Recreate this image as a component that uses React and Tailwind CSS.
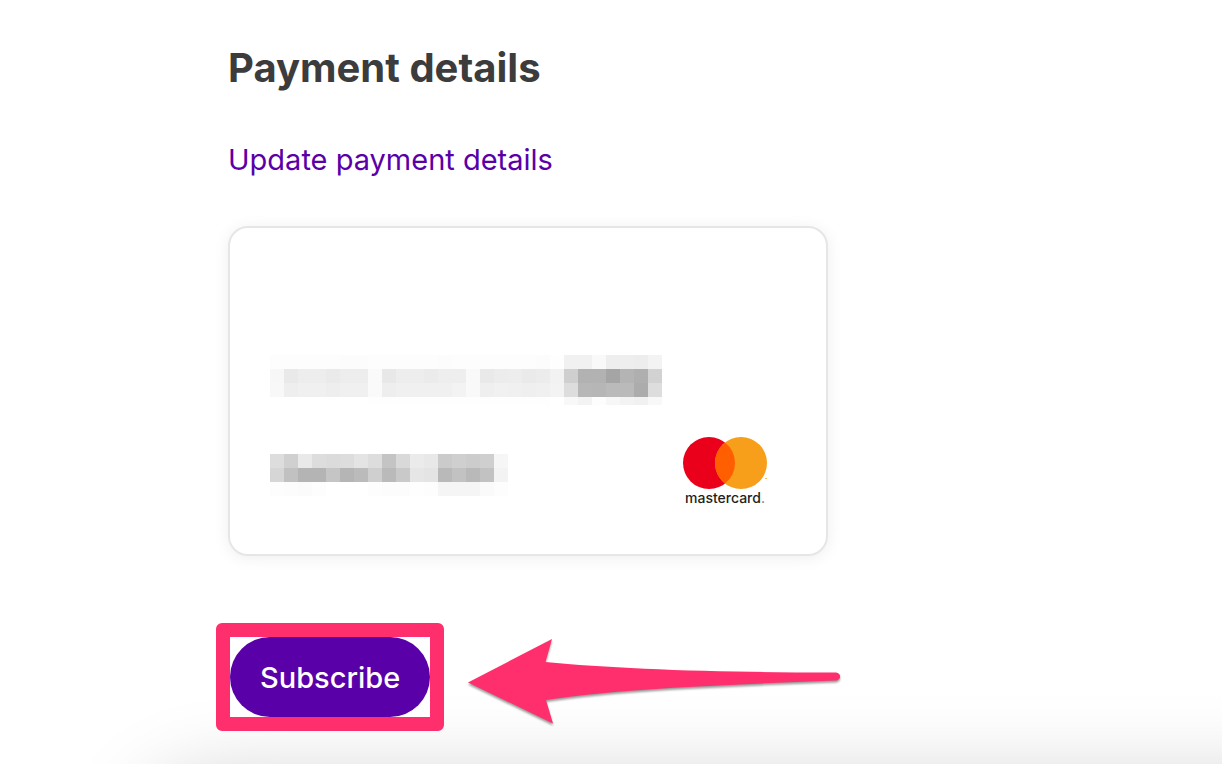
import React from "react";

const numberRows = [
  "fd fd fd fd fd fc fc fd fd fd fd fd fc fd fd fd fd fd fd fc fe f1 f1 f9 ee ee ed f3",
  "f7 e9 ed ed ea ed ed fa e8 ed ed eb ee ee f9 e9 ec ed ea ec f2 cf b2 b2 a5 b4 af d2",
  "f8 ee f0 f0 ee f0 f0 fa ee f0 f0 f0 f0 f3 f9 ef f1 f0 ef f0 f3 dd b7 b6 ba ba ac dd",
  "ff ff ff ff ff ff ff fe fe fe fe fe fe fe fe fe fe fe fe fe ff f8 f3 fd f7 f3 f1 f8",
];

const nameRows = [
  "dd d0 e9 dd db dd e4 dd c4 d9 eb e8 cb cf cc cf f6",
  "d6 c1 b4 b4 c5 b5 bb cf ba c9 e6 e4 b9 c2 b9 c2 f3",
  "fd fc fb fd ff ff ff fd fc fc fe fd f5 f5 f5 fa fd",
];

function Mosaic({ rows, label }) {
  return (
    <div role="img" aria-label={label}>
      {rows.map((row, r) => (
        <div key={r} className={r === 3 ? "flex h-2" : "flex h-3.5"}>
          {row.split(" ").map((v, c) => (
            <span key={c} className="w-3.5" style={{ backgroundColor: `#${v}${v}${v}` }} />
          ))}
        </div>
      ))}
    </div>
  );
}

function Mastercard() {
  return (
    <div className="flex w-21 flex-col items-center">
      <svg viewBox="0 0 84 52" className="h-13 w-full" aria-hidden="true">
        <circle cx="26" cy="26" r="26" fill="#eb001b" />
        <circle cx="58" cy="26" r="26" fill="#f79e1b" />
        <path d="M42 5.5a26 26 0 0 1 0 41a26 26 0 0 1 0-41z" fill="#ff5f00" />
        <path d="M82 41.500h2" stroke="#f79e1b" strokeWidth="0.700" />
      </svg>
      <span className="text-sm leading-[18px] font-medium text-[#231f20]">
        mastercard<span className="font-normal text-gray-500">.</span>
      </span>
    </div>
  );
}

function Arrow() {
  return (
    <svg
      viewBox="0 0 376 90"
      className="pointer-events-none absolute top-0 left-full ml-[37px] h-[90px] w-[376px] max-w-none drop-shadow-[0_2px_1px_rgba(0,0,0,0.4)]"
      aria-hidden="true"
    >
      <path
        d="M1 45.500L85 2L78.500 25C150 32 250 35.500 369 35.500C374.500 36 374.500 43 369 43.500C250 48 150 52 79 63L86 86.500Z"
        fill="#ff2f6d"
      />
    </svg>
  );
}

export default function App() {
  return (
    <div className="relative isolate min-h-screen overflow-hidden bg-white font-[Inter,sans-serif]">
      <div className="absolute top-full -right-40 left-32 -z-10 mt-2.5 h-60 rounded-[90px] shadow-[0_0_80px_rgba(0,0,0,0.17)]" />
      <main className="ml-57 max-w-[600px] pt-11">
        <h1 className="text-[40px] leading-12 font-bold text-[#3c3c3c]">Payment details</h1>
        <a href="#update" className="mt-12 inline-block text-[29px] leading-10 text-[#5a00a8]">
          Update payment details
        </a>
        <section className="mt-[46px] rounded-[20px] border-2 border-[#e6e6e6] bg-white px-10 pt-[127px] pb-[47px] shadow-[0_2px_16px_rgba(0,0,0,0.07)]">
          <Mosaic rows={numberRows} label="Card number hidden" />
          <div className="mt-8 flex items-start justify-between pr-[19px]">
            <div className="pt-[17px]">
              <Mosaic rows={nameRows} label="Card details hidden" />
            </div>
            <Mastercard />
          </div>
        </section>
        <div className="relative mt-[81px] ml-0.5 w-fit bg-white">
          <button
            type="button"
            className="block h-20 rounded-full bg-[#5a00a8] px-[30px] pt-0.5 text-[29px] leading-10 font-medium text-white"
          >
            Subscribe
          </button>
          <div className="pointer-events-none absolute -inset-3.5 rounded-md border-14 border-[#ff2f6d]" />
          <Arrow />
        </div>
      </main>
    </div>
  );
}
